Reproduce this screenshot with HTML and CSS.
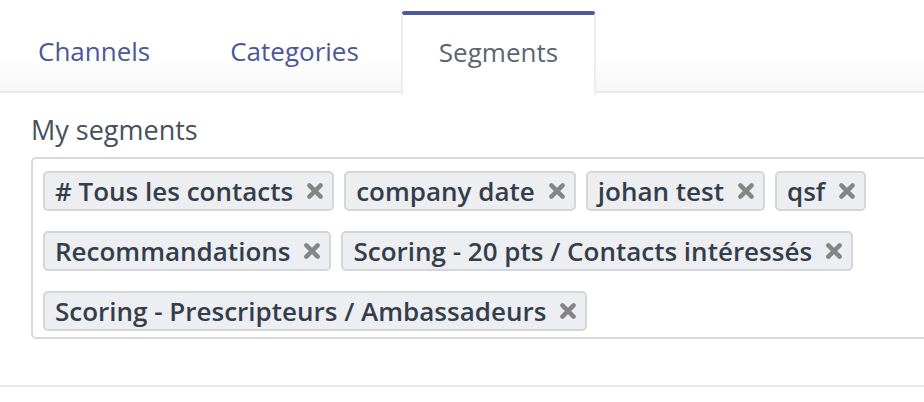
FILE: index.html
```html
<!DOCTYPE html>
<html lang="en">
<head>
    <meta charset="UTF-8">
    <meta name="viewport" content="width=device-width, initial-scale=1.0">
    <title>Segments</title>
    <link rel="stylesheet" href="styles.css">
</head>
<body>
<div class="panel">
    <div class="tabs">
        <div class="tab">Channels</div>
        <div class="tab">Categories</div>
        <div class="tab active">Segments</div>
    </div>
    <div class="content">
        <div class="label">My segments</div>
        <div class="segments-box">
            <span class="tag"># Tous les contacts<span class="remove"><svg viewBox="0 0 16 16"><path d="M3 3L13 13M13 3L3 13"/></svg></span></span>
            <span class="tag">company date<span class="remove"><svg viewBox="0 0 16 16"><path d="M3 3L13 13M13 3L3 13"/></svg></span></span>
            <span class="tag">johan test<span class="remove"><svg viewBox="0 0 16 16"><path d="M3 3L13 13M13 3L3 13"/></svg></span></span>
            <span class="tag">qsf<span class="remove"><svg viewBox="0 0 16 16"><path d="M3 3L13 13M13 3L3 13"/></svg></span></span>
            <span class="tag">Recommandations<span class="remove"><svg viewBox="0 0 16 16"><path d="M3 3L13 13M13 3L3 13"/></svg></span></span>
            <span class="tag">Scoring - 20 pts / Contacts intéressés<span class="remove"><svg viewBox="0 0 16 16"><path d="M3 3L13 13M13 3L3 13"/></svg></span></span>
            <span class="tag">Scoring - Prescripteurs / Ambassadeurs<span class="remove"><svg viewBox="0 0 16 16"><path d="M3 3L13 13M13 3L3 13"/></svg></span></span>
        </div>
    </div>
    <div class="footer-line"></div>
</div>
</body>
</html>
```

FILE: styles.css
```css
body {
    margin: 0;
    padding: 0;
    background: #fff;
    font-family: 'Open Sans', 'Liberation Sans', sans-serif;
    overflow: hidden;
}
.panel {
    width: 100%;
}
.tabs {
    display: flex;
    height: 80px;
    padding-top: 11px;
    background: linear-gradient(#fff 60%, #f7f7f9);
    border-bottom: 2px solid #e9e9ef;
}
.tab {
    padding: 0 38px;
    margin-right: 4px;
    font-size: 26px;
    line-height: 80px;
    color: #4b5899;
}
.tab.active {
    background: #fff;
    color: #5b6672;
    border-top: 4px solid #4d5a9a;
    border-left: 2px solid #ececf1;
    border-right: 2px solid #ececf1;
    border-radius: 4px 4px 0 0;
    padding: 0 36px;
    height: 80px;
    line-height: 74px;
    margin-bottom: -2px;
    position: relative;
    z-index: 1;
}
.content {
    padding: 20px 0 0 31px;
    margin-right: -20px;
}
.label {
    font-size: 27px;
    line-height: 34px;
    color: #47515c;
    margin-bottom: 10px;
}
.segments-box {
    display: flex;
    flex-wrap: wrap;
    row-gap: 20px;
    column-gap: 10px;
    padding: 12px 10px 6px 10px;
    border: 2px solid #d9d9dc;
    border-radius: 5px;
}
.tag {
    display: inline-flex;
    align-items: center;
    height: 36px;
    padding: 0 8px 0 10px;
    background: #eceef1;
    border: 2px solid #d4d6db;
    border-radius: 5px;
    font-size: 26px;
    font-weight: 600;
    color: #343e4a;
    white-space: pre;
}
.remove {
    display: inline-flex;
    margin-left: 13px;
}
.remove svg {
    width: 18px;
    height: 18px;
    stroke: #858585;
    stroke-width: 4;
    stroke-linecap: round;
    fill: none;
}
.footer-line {
    margin-top: 46px;
    border-top: 2px solid #e9e9ef;
}
```
